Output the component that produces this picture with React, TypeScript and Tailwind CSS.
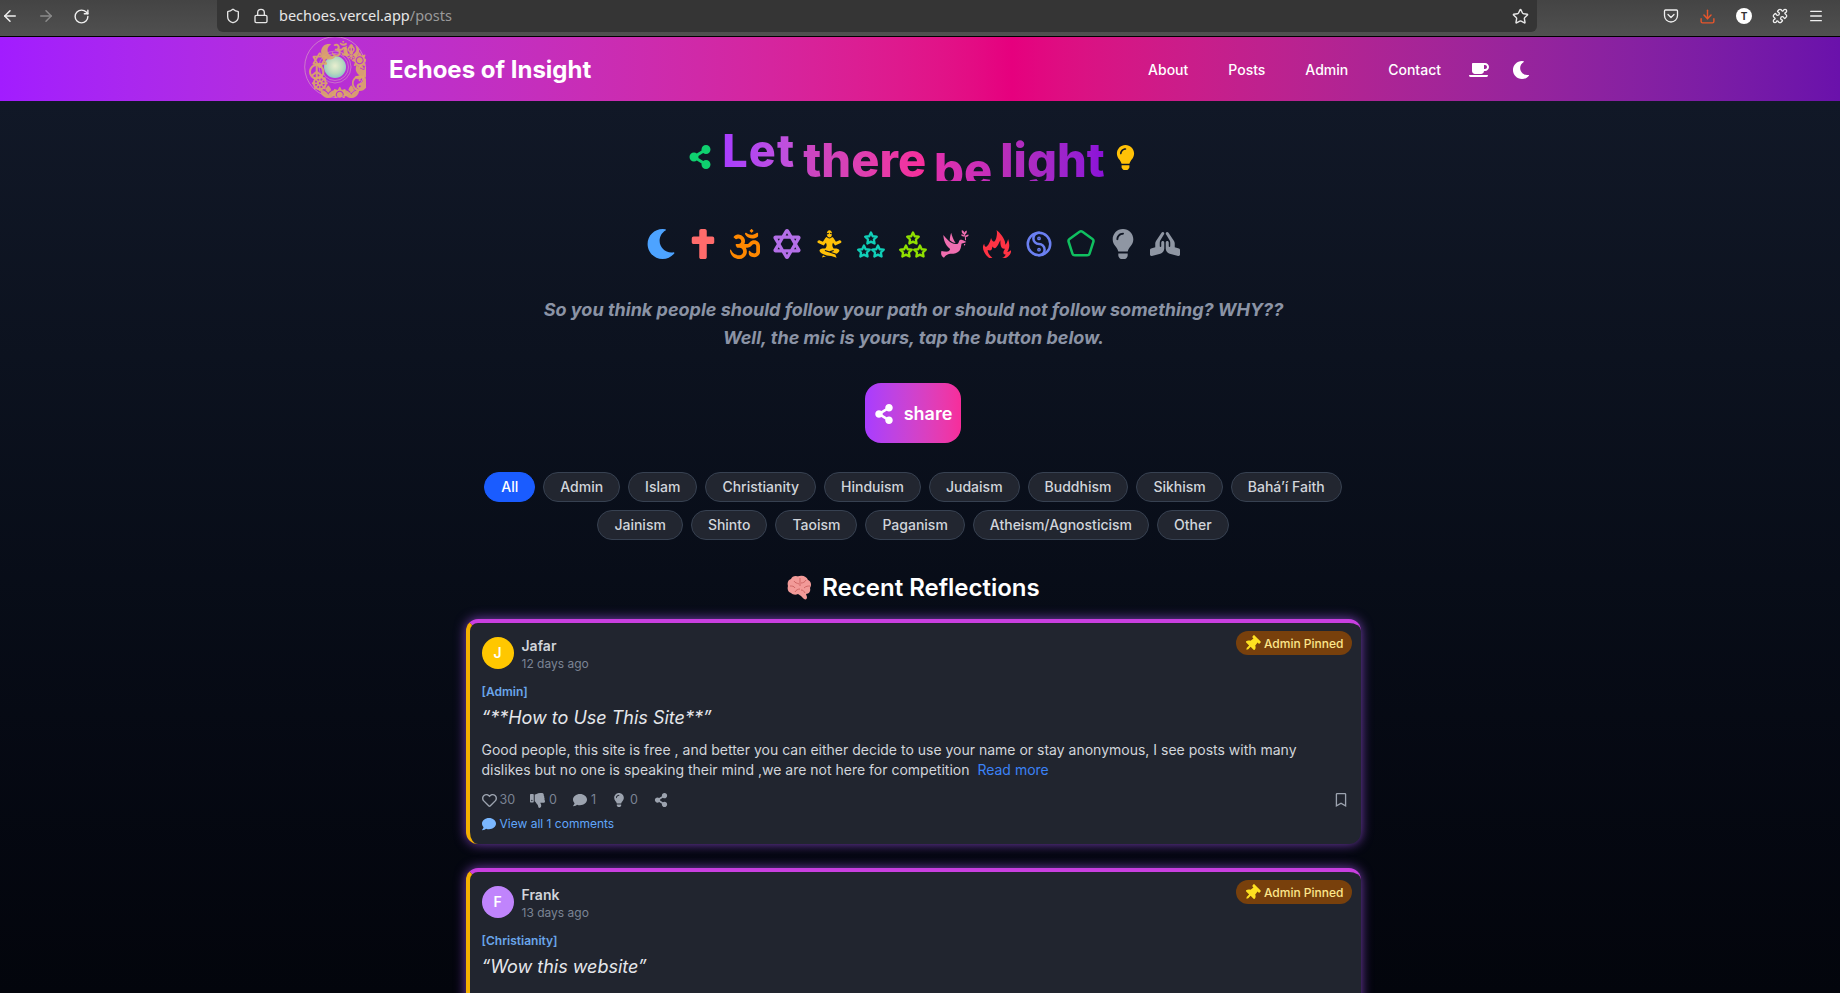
import { ArrowLeft, ArrowRight, RotateCw, Shield, Lock, Star, Download, Puzzle, Menu } from 'lucide-react';
import {
  FaShareAlt, FaLightbulb, FaMoon, FaCross, FaOm, FaStarOfDavid, FaPrayingHands, FaCoffee,
  FaRegHeart, FaThumbsDown, FaComment, FaRegBookmark, FaThumbtack, FaKhanda, FaSun, FaDove,
  FaYinYang, FaDharmachakra, FaSpa, FaPeace,
} from 'react-icons/fa';
import { GiMeditation, GiPeaceDove, GiFlame } from 'react-icons/gi';
import { TbYinYang, TbPentagon } from 'react-icons/tb';

const row1 = ['All', 'Admin', 'Islam', 'Christianity', 'Hinduism', 'Judaism', 'Buddhism', 'Sikhism', 'Bahá’í Faith'];
const row2 = ['Jainism', 'Shinto', 'Taoism', 'Paganism', 'Atheism/Agnosticism', 'Other'];

function Stars({ className }: { className: string }) {
  const star = '12,2 15,8.5 22,9.3 17,14.1 18.2,21 12,17.8 5.8,21 7,14.1 2,9.3 9,8.5';
  return (
    <svg viewBox="0 0 30 30" className={className} fill="none" stroke="currentColor" strokeWidth="4" strokeLinejoin="round">
      <polygon points={star} transform="translate(8 2.3) scale(0.58)" />
      <polygon points={star} transform="translate(1 15.300) scale(0.58)" />
      <polygon points={star} transform="translate(15 15.300) scale(0.58)" />
    </svg>
  );
}

function Brain() {
  return (
    <svg viewBox="0 0 28 28" className="w-7 h-7 shrink-0">
      <path d="M13 3c-3-2-7-1-8 2-3 1-4 4-3 7-1 3 0 6 3 7 2 2 5 2 7 1l3 2 3 3c2 1 3 0 3-2l-1-3c3 0 5-3 4-6 2-3 1-7-2-8-1-3-5-5-8-4-1 0-2 0-4 1z" fill="#f29a98" />
      <path d="M14 4v8M8 7c1 2 3 2 5 3M4 12c2 0 4 0 5 2M20 6c-1 2-3 3-5 3M24 12c-2 0-4 0-6 2M9 18c1-2 3-3 5-3M19 19c-1-2-2-3-4-3" fill="none" stroke="#cf6766" strokeWidth="1" />
    </svg>
  );
}

function Logo() {
  const symbols = [FaOm, FaKhanda, FaSun, FaDove, FaYinYang, FaSpa, FaSun, FaSpa, FaDharmachakra, FaPeace, FaStarOfDavid, FaMoon];
  return (
    <svg viewBox="0 0 62 62" className="w-[62px] h-[62px] shrink-0 self-start -mt-[3px]">
      <defs>
        <radialGradient id="earth" cx="50%" cy="45%" r="55%">
          <stop offset="0%" stopColor="#e9efd0" />
          <stop offset="65%" stopColor="#b7d9bd" />
          <stop offset="100%" stopColor="#8fc4c8" />
        </radialGradient>
      </defs>
      <circle cx="31" cy="31" r="30.300" fill="none" stroke="#d79ac4" strokeWidth="0.7" />
      <circle cx="31" cy="31" r="16" fill="none" stroke="#d79ac4" strokeWidth="0.6" />
      <circle cx="31" cy="31" r="13.500" fill="none" stroke="#d79ac4" strokeWidth="0.6" />
      <circle cx="31" cy="31" r="11" fill="url(#earth)" />
      {symbols.map((Icon, i) => {
        const a = (i * 30 * Math.PI) / 180;
        return (
          <Icon
            key={i}
            x={31 + Math.sin(a) * 23 - 3.25}
            y={31 - Math.cos(a) * 23 - 3.25}
            width={6.5}
            height={6.5}
            color="#dca868"
            opacity={0.9}
          />
        );
      })}
    </svg>
  );
}

function Pocket() {
  return (
    <svg viewBox="0 0 16 16" className="w-4 h-4 text-[#f0f0f0]" fill="none" stroke="currentColor" strokeWidth="1.3">
      <path d="M2.5 2h11c.6 0 1 .4 1 1v4.5c0 3.6-3 6.5-6.5 6.5S1.500 11.100 1.500 7.500V3c0-.6.4-1 1-1z" />
      <path d="M5 6.500l3 3 3-3" strokeLinecap="round" strokeLinejoin="round" />
    </svg>
  );
}

function Card({ initial, avatar, name, age, category, title, children }: {
  initial: string; avatar: string; name: string; age: string; category: string; title: string; children?: React.ReactNode;
}) {
  return (
    <article className="relative h-[225px] shrink-0 bg-[#21252f] rounded-xl border-t-4 border-l-4 border-t-[#c93fe0] border-l-[#f5b000] pt-[14px] pl-3 pr-[15px] shadow-[0_0_12px_rgba(168,85,247,0.7)]">
      <span className="absolute top-2 right-[9px] h-6 pt-px pl-2 pr-2 rounded-full bg-[#78400c] text-[#fde68a] text-xs font-medium flex items-center gap-1">
        <FaThumbtack className="rotate-45 text-[#fde021] text-[16px]" />
        Admin Pinned
      </span>
      <div className="flex items-start gap-2">
        <div className={`w-8 h-8 rounded-full flex items-center justify-center text-white text-sm font-semibold ${avatar}`}>{initial}</div>
        <div>
          <div className="text-sm font-semibold text-[#d1d5db] leading-[18px]">{name}</div>
          <div className="text-xs text-[#7b8494] leading-4 pt-px">{age}</div>
        </div>
      </div>
      <div className="mt-3 text-xs font-semibold text-[#6aa5ea] leading-4">[{category}]</div>
      <div className="mt-1 text-lg italic text-[#e5e7eb] leading-7">“{title}”</div>
      {children}
    </article>
  );
}

export default function App() {
  return (
    <div className="h-screen overflow-hidden flex flex-col font-[Inter,sans-serif]">
      {/* browser chrome */}
      <div className="h-[37px] shrink-0 flex items-start bg-gradient-to-b from-[#444444] to-[#505050] border-b border-black">
        <div className="w-[217px] h-8 flex items-center gap-[18px] pl-px text-[#f0f0f0]">
          <ArrowLeft size={18} />
          <ArrowRight size={18} className="text-[#8a8a8a]" />
          <RotateCw size={17} />
        </div>
        <div className="w-[1320px] h-8 bg-[#353535] rounded-b-md flex items-center pl-2 pr-2 text-[#e6e6e6]">
          <Shield size={16} />
          <Lock size={16} className="ml-3" />
          <span className="ml-[10px] text-[14.5px] font-['Noto_Sans',sans-serif]">bechoes.vercel.app<span className="text-[#9a9a9a]">/posts</span></span>
          <Star size={17} className="ml-auto" />
        </div>
        <div className="flex-1 h-8 flex items-center justify-end gap-[20px] pr-4 text-[#f0f0f0]">
          <Pocket />
          <Download size={17} className="text-[#e8552b]" />
          <div className="w-4 h-4 rounded-full bg-white text-[#333] text-[10px] font-bold flex items-center justify-center">T</div>
          <Puzzle size={16} />
          <Menu size={16} />
        </div>
      </div>

      {/* nav */}
      <nav className="h-16 shrink-0 overflow-hidden bg-gradient-to-r from-[#a21cff] via-[#e6007e] via-[55%] to-[#6a11ab]">
        <div className="w-[1280px] h-full mx-auto pl-6 pr-[30px] pt-0.5 flex items-center">
          <Logo />
          <span className="ml-[23px] text-2xl font-bold text-white">Echoes of Insight</span>
          <div className="ml-auto flex items-center text-sm font-medium text-white">
            <span>About</span>
            <span className="ml-10">Posts</span>
            <span className="ml-10">Admin</span>
            <span className="ml-10">Contact</span>
            <FaCoffee className="ml-7 text-xl" />
            <FaMoon className="ml-[23px] text-lg" />
          </div>
        </div>
      </nav>

      <main className="flex-1 min-h-0 overflow-hidden bg-gradient-to-b from-[#111827] to-[#03050c] pr-[14px] flex flex-col items-center">
        {/* headline */}
        <h1 className="h-[80px] shrink-0 flex items-start gap-2 font-extrabold">
          <FaShareAlt className="mt-[44px] mr-[2px] text-[24px] text-[#0fd06f]" />
          <span className="mt-[20px] h-[60px] text-[45px] leading-[60px] tracking-wide bg-gradient-to-r from-[#a83cff] to-[#c451d8] bg-clip-text text-transparent">Let</span>
          <span className="mt-[29px] h-[51px] text-[47px] leading-[60px] bg-gradient-to-r from-[#c746c4] to-[#f72d9a] bg-clip-text text-transparent">there</span>
          <span className="mt-[39px] h-[41px] text-[47px] leading-[60px] bg-gradient-to-r from-[#e030ac] to-[#c42dbb] bg-clip-text text-transparent">be</span>
          <span className="mt-[29px] h-[51px] text-[47px] leading-[60px] bg-gradient-to-r from-[#bb2eb8] to-[#8b10d8] bg-clip-text text-transparent">light</span>
          <FaLightbulb className="mt-[44px] text-[25px] text-[#ffc107]" />
        </h1>

        {/* faith icons */}
        <div className="mt-[48px] h-[30px] shrink-0 flex items-center gap-3 text-[30px]">
          <FaMoon className="text-[#4da3ff]" />
          <FaCross className="text-[#ff6b6b]" />
          <FaOm className="text-[#ff8800]" />
          <FaStarOfDavid className="text-[#b46fe8]" />
          <GiMeditation className="text-[#ffc107]" />
          <Stars className="w-[30px] h-[30px] text-[#10cfb8]" />
          <Stars className="w-[30px] h-[30px] text-[#8fe000]" />
          <GiPeaceDove className="text-[#f06eb0]" />
          <GiFlame className="text-[#ff3344]" />
          <TbYinYang className="text-[#6b80f2]" />
          <TbPentagon className="text-[#10c060]" />
          <FaLightbulb className="text-[#8f96a3]" />
          <FaPrayingHands className="text-[#8f96a3]" />
        </div>

        <p className="mt-[37px] pl-px text-lg font-bold italic text-[#8b93a5] text-center leading-7">
          So you think people should follow your path or should not follow something? WHY??<br />
          Well, the mic is yours, tap the button below.
        </p>

        <button className="mt-[31px] w-24 h-[60px] shrink-0 rounded-2xl bg-gradient-to-r from-[#a83cff] to-[#f72d9a] text-white text-lg font-semibold flex items-center justify-center gap-[10px] pt-px">
          <FaShareAlt className="text-[20px]" />
          share
        </button>

        {/* filters */}
        <div className="mt-[29px] flex flex-col items-center gap-2 shrink-0">
          {[row1, row2].map((row, r) => (
            <div key={r} className="flex gap-2">
              {row.map((label) => (
                <span
                  key={label}
                  className={label === 'All'
                    ? 'h-[30px] px-4 rounded-full bg-[#1a5cff] border border-[#1a5cff] text-white text-sm font-medium flex items-center'
                    : 'h-[30px] px-4 rounded-full bg-[#222630] border border-[#374151] text-[#d1d5db] text-sm font-medium flex items-center'}
                >
                  {label}
                </span>
              ))}
            </div>
          ))}
        </div>

        <h2 className="mt-8 h-8 shrink-0 flex items-center gap-2 text-2xl font-semibold text-white">
          <Brain />
          Recent Reflections
        </h2>

        {/* posts */}
        <div className="mt-[15px] w-[895px] flex flex-col gap-6">
          <Card initial="J" avatar="bg-[#ffc700]" name="Jafar" age="12 days ago" category="Admin" title="**How to Use This Site**">
            <p className="mt-2 text-sm leading-5 text-[#d1d5db]">
              Good people, this site is free , and better you can either decide to use your name or stay anonymous, I see posts with many dislikes but no one is speaking their mind ,we are not here for competition{' '}
              <span className="ml-1 text-[#3b82f6]">Read more</span>
            </p>
            <div className="mt-[10px] h-5 flex items-center text-[12.5px] text-[#7b8494]">
              <FaRegHeart className="text-[15px] text-[#9ca3af]" />
              <span className="ml-[3px]">30</span>
              <FaThumbsDown className="ml-[15px] text-[15px] text-[#9ca3af]" />
              <span className="ml-1">0</span>
              <FaComment className="ml-4 text-[14px] text-[#9ca3af]" />
              <span className="ml-1">1</span>
              <FaLightbulb className="ml-[16px] text-[14px] text-[#9ca3af]" />
              <span className="ml-1">0</span>
              <FaShareAlt className="ml-4 text-[14px] text-[#9ca3af]" />
              <FaRegBookmark className="ml-auto text-[14px] text-[#9ca3af] -mr-[2px]" />
            </div>
            <div className="mt-[6px] flex items-center gap-1 text-xs text-[#60a5fa]">
              <FaComment className="text-[14px] text-[#7ab7ff]" />
              View all 1 comments
            </div>
          </Card>
          <Card initial="F" avatar="bg-[#c084fc]" name="Frank" age="13 days ago" category="Christianity" title="Wow this website" />
        </div>
      </main>
    </div>
  );
}
